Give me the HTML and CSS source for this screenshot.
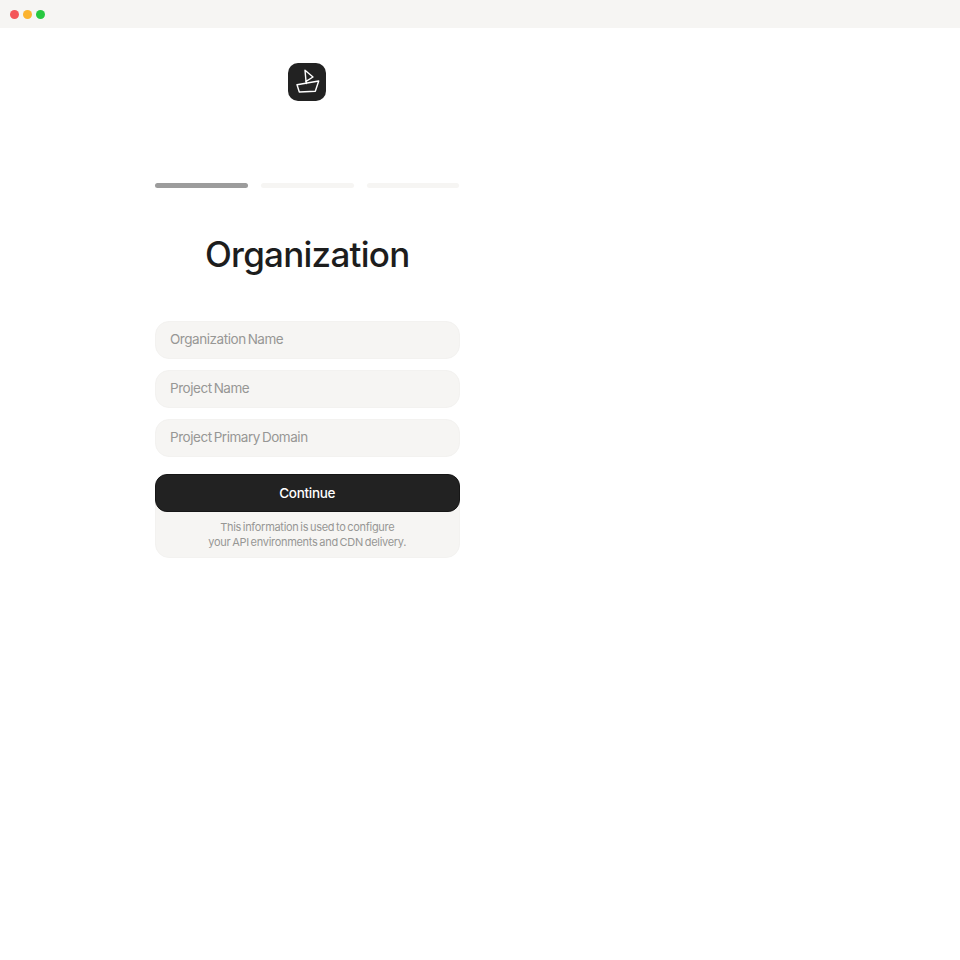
FILE: index.html
```html
<!DOCTYPE html>
<html lang="en">
<head>
<meta charset="utf-8">
<title>Organization</title>
<link rel="stylesheet" href="styles.css">
</head>
<body>
<header class="titlebar">
  <span class="dot dot-red"></span>
  <span class="dot dot-yellow"></span>
  <span class="dot dot-green"></span>
</header>
<main class="panel">
  <div class="logo">
    <svg width="26" height="26" viewBox="0 0 26 26" fill="none" stroke="#fff" stroke-width="1.4" stroke-linejoin="round" stroke-linecap="round">
      <path d="M11 1.3 L19 8 L12 12.3 Z"/>
      <path d="M12 12.3 L12.4 14.5"/>
      <path d="M3 15.7 L24.7 12 L21.3 22.3 L5.3 23 Z"/>
    </svg>
  </div>
  <div class="steps">
    <span class="step step-active"></span>
    <span class="step"></span>
    <span class="step"></span>
  </div>
  <h1 class="title">Organization</h1>
  <form class="fields">
    <div class="field">Organization Name</div>
    <div class="field">Project Name</div>
    <div class="field">Project Primary Domain</div>
  </form>
  <div class="action">
    <button class="continue" type="button">Continue</button>
    <p class="note">This information is used to configure<br>your API environments and CDN delivery.</p>
  </div>
</main>
</body>
</html>
```
FILE: styles.css
```css
* { box-sizing: border-box; }
html, body { margin: 0; padding: 0; background: #fff; }
body { font-family: Inter, "Noto Sans", sans-serif; color: #1f1f1f; }

.titlebar {
  height: 28px;
  background: #f6f5f3;
  display: flex;
  align-items: center;
  gap: 4px;
  padding-left: 10px;
}
.dot { width: 9px; height: 9px; border-radius: 50%; }
.dot-red { background: #f4565a; }
.dot-yellow { background: #fbb32f; }
.dot-green { background: #27c840; }

.panel {
  width: 304.5px;
  margin-left: 155px;
  padding-top: 35px;
  display: flex;
  flex-direction: column;
  align-items: stretch;
}
.logo {
  width: 38px;
  height: 38px;
  border-radius: 10px;
  background: #222;
  align-self: center;
  display: flex;
  align-items: center;
  justify-content: center;
}
.steps {
  display: flex;
  gap: 13px;
  margin-top: 82px;
}
.step { flex: 1; height: 5px; border-radius: 3px; background: #f6f5f3; }
.step-active { background: #9c9c9c; }

.title {
  margin: 44px 0 0;
  height: 44px;
  font-size: 35px;
  line-height: 44px;
  font-weight: 500;
  letter-spacing: -0.75px;
  text-align: center;
  color: #1d1d1d;
}
.fields {
  display: flex;
  flex-direction: column;
  gap: 11px;
  margin-top: 45px;
}
.field {
  height: 38px;
  border-radius: 14px;
  background: #f6f5f3;
  border: 1px solid #f3f2f0;
  padding-left: 14px;
  font-size: 13.5px;
  line-height: 35px;
  letter-spacing: -0.45px;
  word-spacing: -1.4px;
  color: #979795;
}
.action { margin-top: 17px; position: relative; }
.continue {
  display: block;
  position: relative;
  width: 100%;
  height: 38px;
  padding: 0;
  border: 1px solid #161616;
  border-radius: 12px;
  background: #222;
  color: #fff;
  font-family: inherit;
  font-size: 13.5px;
  font-weight: 500;
  letter-spacing: -0.3px;
}
.note {
  margin: -12px 0 0;
  padding: 19px 0 8px;
  height: 58px;
  border-radius: 0 0 14px 14px;
  background: #f6f5f3;
  border: 1px solid #f3f2f0;
  font-size: 11px;
  line-height: 15px;
  letter-spacing: -0.3px;
  word-spacing: -1px;
  text-align: center;
  color: #979795;
}
```
